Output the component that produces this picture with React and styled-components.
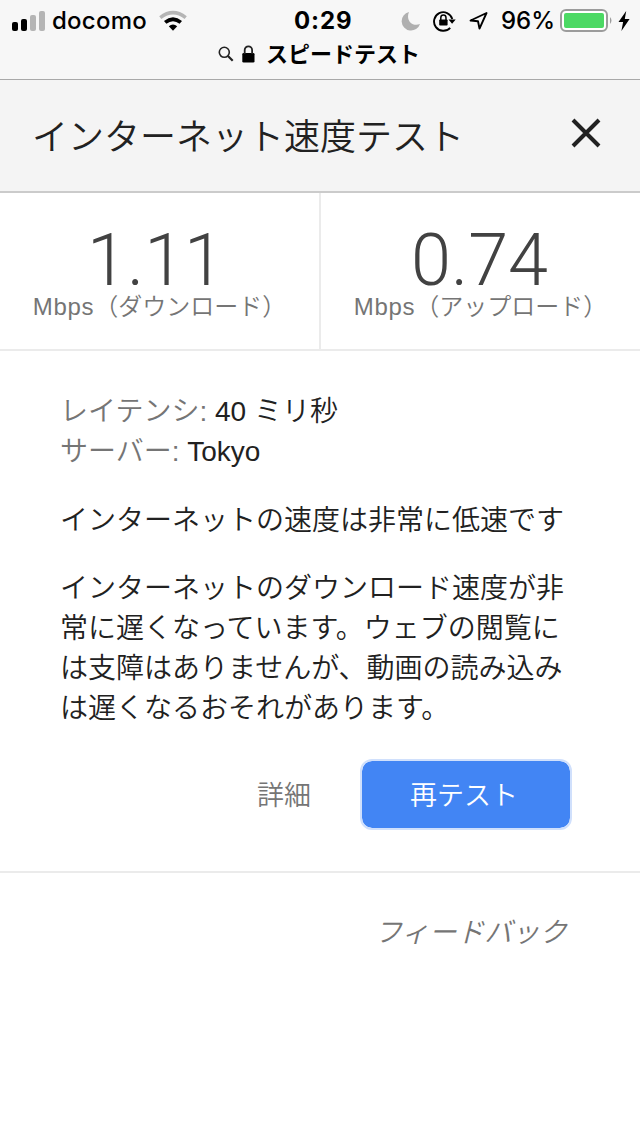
import React from 'react'
import styled, { createGlobalStyle } from 'styled-components'

const GlobalStyle = createGlobalStyle`
  * {
    box-sizing: border-box;
  }

  body {
    margin: 0;
    background: #fff;
    color: #212121;
    font-family: 'Liberation Sans', 'Noto Sans CJK JP', sans-serif;
    font-size: 28px;
    font-weight: 350;
    line-height: 40px;
  }

  svg {
    display: block;
    flex: none;
  }
`

const Page = styled.div`
  width: 640px;
  min-height: 1136px;
  background: #fff;
`

const BrowserBar = styled.div`
  height: 80px;
  background: #f7f7f7;
  border-bottom: 1px solid #a9a9a9;
`

const StatusBar = styled.div`
  display: grid;
  grid-template-columns: 294px 58px 1fr;
  height: 40px;
  color: #000;
  font-family: Inter, sans-serif;
  font-size: 24px;
  font-weight: 500;
  line-height: 42px;
`

const Carrier = styled.div`
  display: flex;
  align-items: center;
  padding-left: 12px;
`

const CarrierName = styled.span`
  width: 95px;
  margin: 0 11px 0 6px;
  letter-spacing: 0.25px;
`

const Clock = styled.div`
  font-weight: 700;
  letter-spacing: 0.9px;
  white-space: nowrap;
`

const Indicators = styled.div`
  display: flex;
  align-items: center;
  padding-left: 49px;
`

const Percent = styled.span`
  width: 52px;
  margin: 0 7px 0 13px;
  white-space: nowrap;
`

const AddressBar = styled.div`
  display: flex;
  align-items: center;
  height: 28px;
  padding-left: 218px;
  color: #000;
  font-family: 'Noto Sans CJK JP', sans-serif;
  font-size: 22px;
  font-weight: 700;
  line-height: 28px;
`

const PageTitle = styled.span`
  margin-left: 11px;
  padding-bottom: 5px;
`

const Header = styled.header`
  display: flex;
  align-items: center;
  justify-content: space-between;
  height: 113px;
  padding: 0 38px 5px 32px;
  background: #f4f4f4;
  border-bottom: 2px solid #cbcbcb;
`

const Title = styled.h1`
  margin: 0;
  padding-top: 9px;
  font-size: 36px;
  font-weight: 350;
`

const CloseButton = styled.button`
  padding: 0;
  border: 0;
  background: none;
  color: #212121;
`

const Results = styled.div`
  display: grid;
  grid-template-columns: 321px 1fr;
  height: 158px;
  border-bottom: 2px solid #ebebeb;
`

const Result = styled.div`
  display: flex;
  flex-direction: column;
  align-items: center;
  padding-top: 34px;

  &:first-child {
    border-right: 2px solid #ebebeb;
  }
`

const Speed = styled.div`
  height: 67px;
  padding-right: ${p => p.$trim || 0}px;
  color: #424242;
  font-family: Roboto, sans-serif;
  font-size: 72px;
  font-weight: 300;
  line-height: 68px;
`

const Unit = styled.div`
  color: #757575;
  font-size: 24px;
  line-height: 26px;
  white-space: nowrap;
`

const Latin = styled.span`
  letter-spacing: 0.75px;
`

const Details = styled.section`
  height: 522px;
  padding: 41px 60px 0;
  border-bottom: 2px solid #ebebeb;
`

const Row = styled.div`
  height: 40px;
`

const Label = styled.span`
  color: #757575;
`

const Text = styled.p`
  margin: 28px 0 0;

  ${Row} + & {
    margin-top: 29px;
  }
`

const Actions = styled.div`
  display: flex;
  justify-content: flex-end;
  align-items: center;
  margin: 30px 8px 0 0;
`

const Button = styled.button`
  width: ${p => (p.$primary ? '212px' : '56px')};
  height: 71px;
  margin-left: 48px;
  padding: ${p => (p.$primary ? '2px 4px 0 0' : '3px 0 0')};
  border: ${p => (p.$primary ? '2px solid #d0e0fc' : '0')};
  border-radius: 12px;
  background: ${p => (p.$primary ? '#4285f4' : 'none')};
  background-clip: padding-box;
  color: ${p => (p.$primary ? '#fff' : '#757575')};
  font: inherit;
  font-size: 27px;
`

const Feedback = styled.div`
  padding: 40px 73px 0 0;
  color: #757575;
  font-size: 27.6px;
  font-style: italic;
  text-align: right;
`

const SignalIcon = () => (
  <svg width="34" height="22" viewBox="0 0 34 22">
    <rect x="0" y="12" width="6" height="9" rx="2" />
    <rect x="9" y="9" width="6" height="12" rx="2" />
    <rect x="18" y="5" width="6" height="16" rx="2" fill="#b5b5b5" />
    <rect x="27" y="1" width="6" height="20" rx="2" fill="#b5b5b5" />
  </svg>
)

const WifiIcon = () => (
  <svg width="30" height="22" viewBox="0 0 30 22" fill="none">
    <path d="M2.3 7.6Q15-2.2 27.7 7.6" stroke="#b5b5b5" strokeWidth="3.6" />
    <path d="M7.2 12.4Q15 6 22.8 12.4" stroke="#000" strokeWidth="3.8" />
    <path d="M10.8 16.2Q15 12.8 19.2 16.2L15 20.8Z" fill="#000" />
  </svg>
)

const MoonIcon = () => (
  <svg width="20" height="20" viewBox="0 0 20 20">
    <path d="M8 1A9.4 9.4 0 1 0 19 13C11 16 4.5 9 8 1Z" fill="#b0b0b0" />
  </svg>
)

const RotationIcon = () => (
  <svg width="23" height="22" viewBox="0 0 23 22">
    <path d="M17.2 17.8A9.3 9.3 0 1 1 19.3 9" fill="none" stroke="#000" strokeWidth="1.9" />
    <path d="M15.5 9.6H22.7L19.1 13.7Z" />
    <rect x="6.2" y="9.5" width="8.4" height="6" rx="0.8" />
    <path d="M7.8 10V7.7a2.6 2.6 0 0 1 5.2 0V10" fill="none" stroke="#000" strokeWidth="1.5" />
  </svg>
)

const LocationIcon = () => (
  <svg width="19" height="18" viewBox="0 0 19 18">
    <path
      d="M17.5 1L1.6 8.5L9 9.2L10.5 16.6Z"
      fill="none"
      stroke="#000"
      strokeWidth="1.9"
      strokeLinejoin="round"
    />
  </svg>
)

const BatteryIcon = () => (
  <svg width="53" height="24" viewBox="0 0 53 24">
    <rect x="1" y="1" width="46" height="21" rx="5" fill="#fff" stroke="#9c9c9c" strokeWidth="2" />
    <rect x="4" y="4" width="40" height="15" rx="2" fill="#4cd964" />
    <path d="M50 8Q53 11.5 50 15Z" fill="#9c9c9c" />
  </svg>
)

const BoltIcon = () => (
  <svg width="12" height="20" viewBox="0 0 12 20">
    <path d="M8.2 0L0.5 11H5.1L3.4 20L11.6 8H6.8Z" />
  </svg>
)

const SearchIcon = () => (
  <svg width="16" height="16" viewBox="0 0 16 16" fill="none" stroke="#222">
    <circle cx="6.3" cy="6.3" r="5" strokeWidth="1.6" />
    <path d="M10 10L14.7 14.7" strokeWidth="2.2" />
  </svg>
)

const LockIcon = () => (
  <svg width="13" height="18" viewBox="0 0 13 18">
    <rect x="0.3" y="8" width="12.2" height="9.5" rx="1.3" />
    <path d="M2.7 9V5a3.7 3.7 0 0 1 7.4 0V9" fill="none" stroke="#222" strokeWidth="1.8" />
  </svg>
)

const CloseIcon = () => (
  <svg width="32" height="32" viewBox="0 0 32 32">
    <path d="M3 3L29 29M29 3L3 29" stroke="currentColor" strokeWidth="4" />
  </svg>
)

const Spacer = styled.span`
  flex: none;
  width: ${p => p.$width}px;
`

export default function App() {
  return (
    <Page>
      <GlobalStyle />
      <BrowserBar>
        <StatusBar>
          <Carrier>
            <SignalIcon />
            <CarrierName>docomo</CarrierName>
            <WifiIcon />
          </Carrier>
          <Clock>0:29</Clock>
          <Indicators>
            <MoonIcon />
            <Spacer $width={12} />
            <RotationIcon />
            <Spacer $width={13} />
            <LocationIcon />
            <Percent>96%</Percent>
            <BatteryIcon />
            <Spacer $width={5} />
            <BoltIcon />
          </Indicators>
        </StatusBar>
        <AddressBar>
          <SearchIcon />
          <Spacer $width={8} />
          <LockIcon />
          <PageTitle>スピードテスト</PageTitle>
        </AddressBar>
      </BrowserBar>

      <Header>
        <Title>インターネット速度テスト</Title>
        <CloseButton aria-label="閉じる">
          <CloseIcon />
        </CloseButton>
      </Header>

      <Results>
        <Result>
          <Speed $trim={8}>1.11</Speed>
          <Unit>
            <Latin>Mbps</Latin>（ダウンロード）
          </Unit>
        </Result>
        <Result>
          <Speed $trim={2}>0.74</Speed>
          <Unit>
            <Latin>Mbps</Latin>（アップロード）
          </Unit>
        </Result>
      </Results>

      <Details>
        <Row>
          <Label>レイテンシ:</Label> 40 ミリ秒
        </Row>
        <Row>
          <Label>サーバー:</Label> Tokyo
        </Row>
        <Text>インターネットの速度は非常に低速です</Text>
        <Text>
          インターネットのダウンロード速度が非常に遅くなっています。ウェブの閲覧には支障はありませんが、動画の読み込みは遅くなるおそれがあります。
        </Text>
        <Actions>
          <Button>詳細</Button>
          <Button $primary>再テスト</Button>
        </Actions>
      </Details>

      <Feedback>フィードバック</Feedback>
    </Page>
  )
}
